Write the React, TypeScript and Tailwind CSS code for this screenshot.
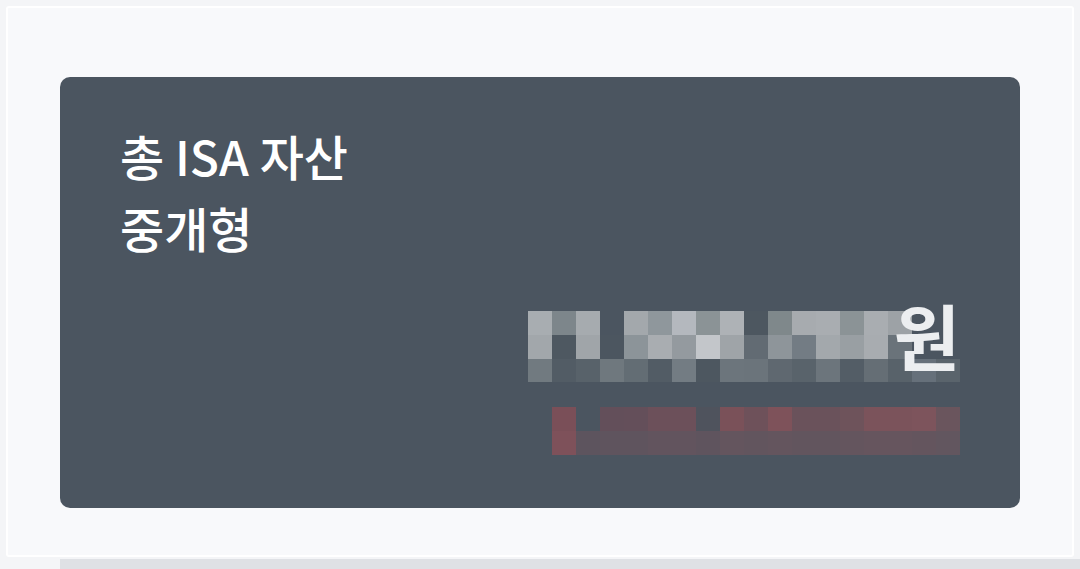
const AMOUNT_ROWS: string[][] = [
  ['#a8adb1', '#7d868b', '#a6abaf', '#4b5560', '#a3a8ac', '#8f979c', '#b4b8be', '#8b9396', '#aeb2b6', '#4d5760', '#7f888b', '#a7abaf', '#a9adb1', '#8b9396', '#a9adb1', '#9da2a6', '#4b5560', '#4b5560'],
  ['#a2a7ab', '#4e5861', '#a0a5a9', '#4c5660', '#8c9499', '#a9adb1', '#949a9f', '#c3c6ca', '#9fa4a8', '#626b73', '#8e959a', '#737c84', '#a3a8ac', '#999fa3', '#a8acb0', '#6a737a', '#4b5560', '#4b5560'],
  ['#717a80', '#525c65', '#58626a', '#6f787e', '#636d74', '#525c65', '#737c83', '#4d5760', '#6c757c', '#6b747b', '#5f6870', '#59636b', '#6c757c', '#535d66', '#656e75', '#58626a', '#66707a', '#5a646c'],
]

const CHANGE_ROWS: string[][] = [
  ['#7a4f58', '#4b5560', '#634f5a', '#644f5a', '#6c505a', '#6c505a', '#4f535d', '#7a5159', '#6e515a', '#7e525a', '#6a525b', '#6a525b', '#6e535b', '#7b535b', '#7b535b', '#7d545c', '#6a555d'],
  ['#7e515a', '#5d545e', '#5f545e', '#5f545e', '#62545e', '#62545e', '#5f545e', '#64555e', '#62555e', '#64555e', '#62555e', '#62555e', '#64555e', '#66555e', '#66555e', '#64555e', '#62565f'],
]

function Mosaic({ rows, rowHeights }: { rows: string[][]; rowHeights: string[] }) {
  return (
    <div className="flex flex-col">
      {rows.map((row, r) => (
        <div key={r} className={`flex ${rowHeights[r]}`}>
          {row.map((c, i) => (
            <div key={i} className="w-6 h-full" style={{ backgroundColor: c }} />
          ))}
        </div>
      ))}
    </div>
  )
}

export default function App() {
  return (
    <div
      className="w-[1080px] h-[569px] overflow-hidden bg-[#f4f5f7] flex flex-col"
      style={{ fontFamily: '"Noto Sans CJK KR", "Noto Sans", sans-serif' }}
    >
      <div className="mx-[6px] mt-[6px] h-[557px] rounded-[3px] border-2 border-white bg-[#f8f9fb] pl-[52px] pt-[69px]">
        <div className="w-[960px] h-[431px] rounded-[10px] bg-[#4b5560] flex flex-col px-[60px] pt-[42px]">
          <div className="text-white text-[48px] leading-[72px] font-medium">
            <p>총 ISA 자산</p>
            <p>중개형</p>
          </div>

          <div className="flex flex-col items-end mt-[48px]">
            <div className="relative">
              <Mosaic rows={AMOUNT_ROWS} rowHeights={['h-6', 'h-6', 'h-[23px]']} />
              <span className="absolute right-0 top-[-13px] text-[72px] leading-[72px] font-bold text-[#eceef0]">
                원
              </span>
            </div>
            <div className="mt-[25px]">
              <Mosaic rows={CHANGE_ROWS} rowHeights={['h-6', 'h-6']} />
            </div>
          </div>
        </div>
      </div>
      <div className="ml-[60px] mt-[2px] h-[10px] bg-[#dfe1e5]" />
    </div>
  )
}
